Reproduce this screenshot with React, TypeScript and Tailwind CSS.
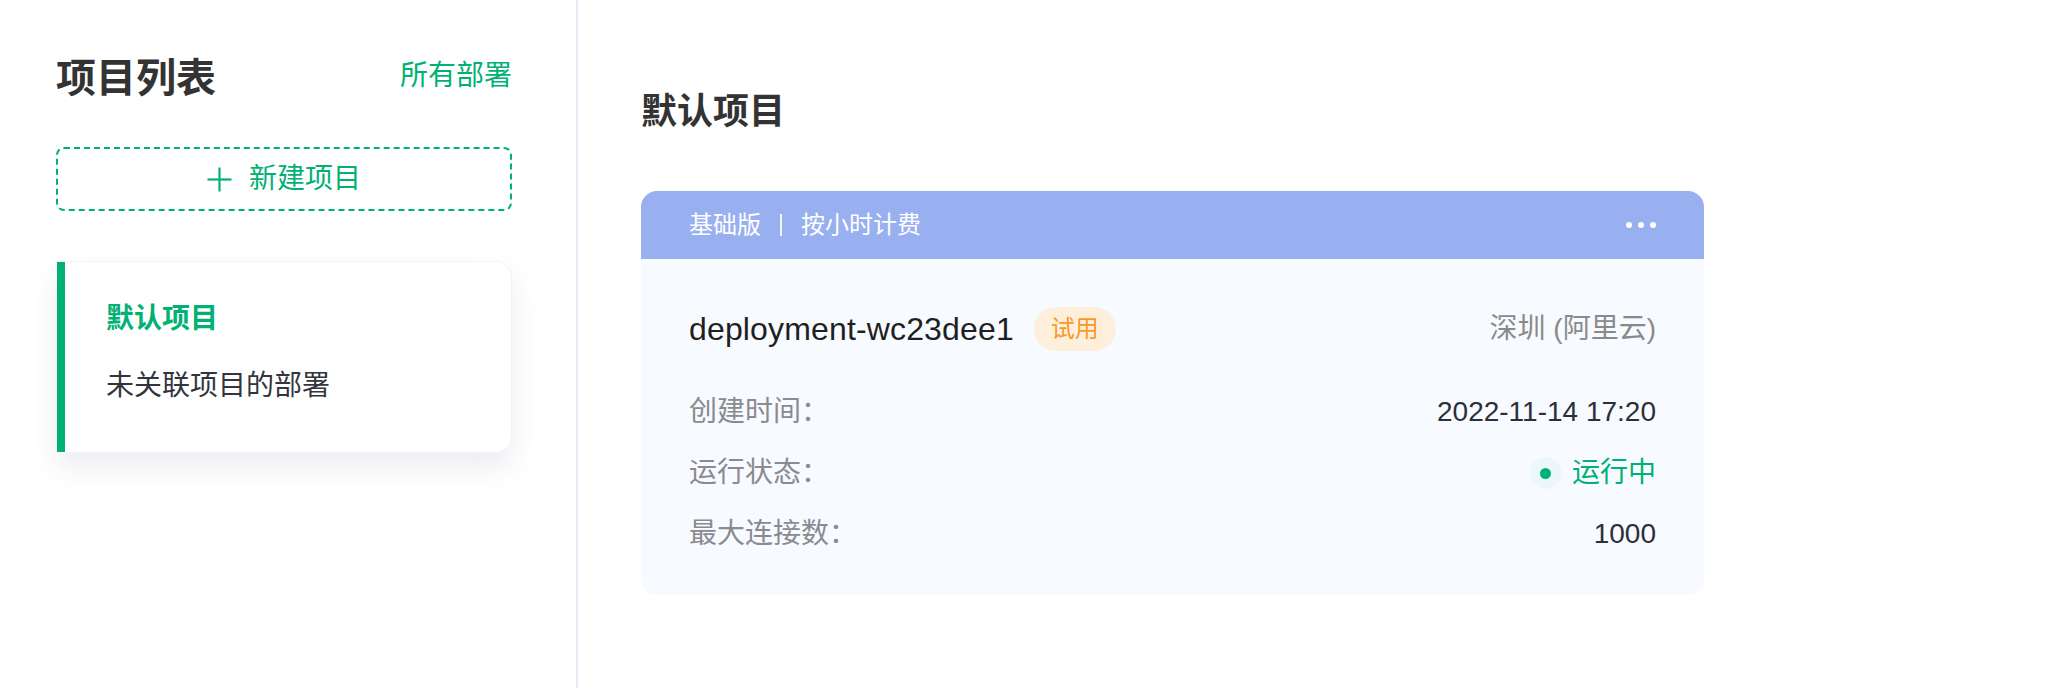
const font = "font-['Liberation_Sans','Noto_Sans_CJK_SC',sans-serif]";

function PlusIcon() {
  return (
    <svg width="25" height="25" viewBox="0 0 25 25" fill="none" stroke="currentColor" strokeWidth="2.2">
      <line x1="12.5" y1="0.5" x2="12.5" y2="24.5" />
      <line x1="0.5" y1="12.5" x2="24.5" y2="12.5" />
    </svg>
  );
}

function Sidebar() {
  return (
    <aside className="w-[578px] shrink-0 border-r-2 border-[#e6ebf5] pl-[56px] pt-[58px]">
      <div className="w-[456px]">
        <div className="flex items-center justify-between h-[40px]">
          <h1 className="text-[40px] leading-[40px] font-bold text-[#333333]">项目列表</h1>
          <a className="text-[28px] leading-[28px] text-[#00b174] mt-[-4px]">所有部署</a>
        </div>
        <button className="mt-[49px] w-full h-[64px] rounded-[8px] border-2 border-dashed border-[#00b174] flex items-center justify-center gap-[17px] text-[#00b174]">
          <PlusIcon />
          <span className="text-[28px] leading-[28px]">新建项目</span>
        </button>
        <div className="mt-[50px] ml-[1px] h-[192px] flex rounded-r-[16px] bg-white border border-l-0 border-[#f2f4f7] shadow-[0_14px_28px_rgba(40,60,110,0.09)]">
          <div className="w-[8px] bg-[#00b174]" />
          <div className="pl-[41px] pt-[43px] flex flex-col gap-[39px]">
            <p className="text-[28px] leading-[28px] font-bold text-[#00b174]">默认项目</p>
            <p className="text-[28px] leading-[28px] text-[#33353d]">未关联项目的部署</p>
          </div>
        </div>
      </div>
    </aside>
  );
}

function InfoRow({ label, children }: { label: string; children: React.ReactNode }) {
  return (
    <div className="flex items-center justify-between h-[40px]">
      <span className="text-[28px] leading-[28px] text-[#8a8a8f]">{label}</span>
      {children}
    </div>
  );
}

function DeploymentCard() {
  return (
    <div className="mt-[61px] w-[1063px] rounded-[16px] overflow-hidden bg-[#f7faff]">
      <div className="h-[68px] bg-[#98aff0] flex items-center justify-between px-[48px] text-white">
        <div className="flex items-center text-[24px] leading-[24px]">
          <span>基础版</span>
          <span className="mx-[19px] w-[2px] h-[22px] bg-white/90" />
          <span>按小时计费</span>
        </div>
        <div className="flex gap-[6px]">
          <span className="w-[6px] h-[6px] rounded-full bg-white" />
          <span className="w-[6px] h-[6px] rounded-full bg-white" />
          <span className="w-[6px] h-[6px] rounded-full bg-white" />
        </div>
      </div>
      <div className="px-[48px] pt-[48px] pb-[41px]">
        <div className="flex items-center justify-between h-[44px]">
          <div className="flex items-center gap-[20px]">
            <span className="text-[32px] leading-[32px] tracking-[0.15px] text-[#1f1f22]">deployment-wc23dee1</span>
            <span className="h-[44px] px-[17px] rounded-full bg-[#fdefdc] text-[#f79a2a] text-[24px] leading-[44px]">试用</span>
          </div>
          <span className="text-[28px] leading-[28px] text-[#8a8a8a]">深圳 (阿里云)</span>
        </div>
        <div className="mt-[41px] flex flex-col gap-[21px]">
          <InfoRow label="创建时间：">
            <span className="text-[28px] leading-[28px] text-[#2c2f37]">2022-11-14 17:20</span>
          </InfoRow>
          <InfoRow label="运行状态：">
            <span className="flex items-center gap-[10px] text-[28px] leading-[28px] text-[#00b174]">
              <span className="w-[32px] h-[32px] rounded-full bg-[#00b174]/[0.04] flex items-center justify-center">
                <span className="w-[11px] h-[11px] rounded-full bg-[#00b174]" />
              </span>
              运行中
            </span>
          </InfoRow>
          <InfoRow label="最大连接数：">
            <span className="text-[28px] leading-[28px] text-[#2c2f37]">1000</span>
          </InfoRow>
        </div>
      </div>
    </div>
  );
}

export default function App() {
  return (
    <div className={`${font} flex h-[688px] w-[2048px] bg-white`}>
      <Sidebar />
      <main className="pl-[63px] pt-[94px]">
        <h2 className="text-[36px] leading-[36px] font-bold text-[#333333]">默认项目</h2>
        <DeploymentCard />
      </main>
    </div>
  );
}
